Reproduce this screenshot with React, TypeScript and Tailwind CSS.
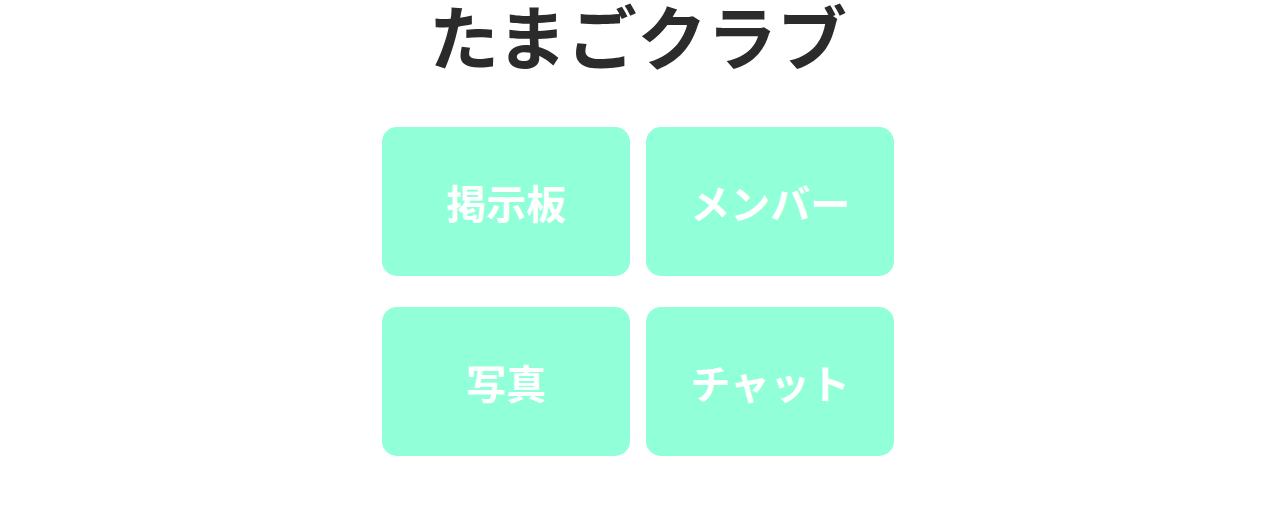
import React from 'react';

const items = ['掲示板', 'メンバー', '写真', 'チャット'];

const App: React.FC = () => {
  return (
    <div
      className="min-h-[511px] bg-white flex flex-col items-center"
      style={{ fontFamily: '"Noto Sans CJK JP", "Noto Sans", sans-serif' }}
    >
      <h1 className="text-[70px] leading-none font-bold text-[#2b2b2b]">たまごクラブ</h1>
      <div className="mt-[57px] grid grid-cols-[248px_248px] gap-x-4 gap-y-[31px]">
        {items.map((label) => (
          <button
            key={label}
            className="h-[149px] rounded-[15px] bg-[#91ffd7] text-white text-[40px] font-bold flex items-center justify-center"
          >
            {label}
          </button>
        ))}
      </div>
    </div>
  );
};

export default App;
